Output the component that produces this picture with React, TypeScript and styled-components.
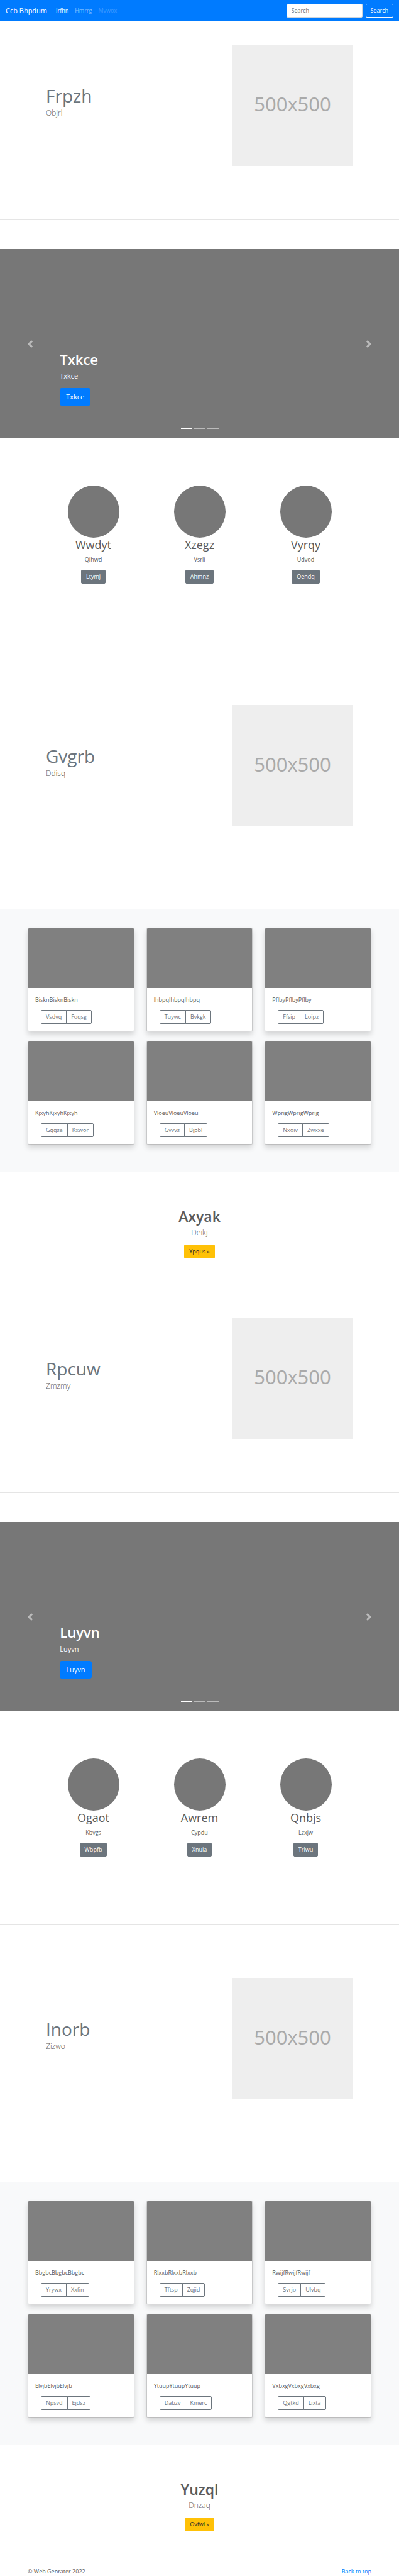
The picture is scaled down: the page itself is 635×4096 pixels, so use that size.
import React from "react";
import styled, { createGlobalStyle, css } from "styled-components";

const GlobalStyle = createGlobalStyle`
  *, *::before, *::after { box-sizing: border-box; }
  body {
    margin: 0;
    background: #fff;
    color: #5a5a5a;
    font-family: "Open Sans", "Noto Sans", sans-serif;
    font-size: 9px;
    line-height: 14px;
  }
  h1, h2, p { margin: 0; }
`;

const NavBar = styled.nav`
  display: flex;
  align-items: center;
  height: 33px;
  padding: 0 9px;
  background: #007bff;
`;

const Brand = styled.a`
  margin-right: 14px;
  color: #fff;
  font-size: 11px;
  line-height: 18px;
  text-decoration: none;
`;

const NavLinks = styled.div`
  display: flex;
  flex: 1;
  gap: 10px;
`;

const NavLink = styled.a<{ $alpha: number }>`
  color: rgba(255, 255, 255, ${(p) => p.$alpha});
  text-decoration: none;
`;

const SearchForm = styled.form`
  display: flex;
  gap: 5px;
`;

const SearchInput = styled.input`
  width: 121px;
  height: 22px;
  padding: 0 7px;
  border: 1px solid #ced4da;
  border-radius: 2px;
  background: #fff;
  font: inherit;
  &::placeholder { color: #6c757d; opacity: 1; }
`;

type Tone = "primary" | "secondary" | "warning" | "outlineLight";

const tones = {
  primary: css`background: #007bff; border-color: #007bff; color: #fff;`,
  secondary: css`background: #6c757d; border-color: #6c757d; color: #fff;`,
  warning: css`background: #ffc107; border-color: #ffc107; color: #212529;`,
  outlineLight: css`background: transparent; border-color: #f8f9fa; color: #f8f9fa;`,
};

const Button = styled.button<{ $tone: Tone; $large?: boolean }>`
  height: ${(p) => (p.$large ? 28 : 22)}px;
  padding: 0 ${(p) => (p.$large ? 9 : 7)}px;
  border: 1px solid;
  border-radius: ${(p) => (p.$large ? 3 : 2)}px;
  font-family: inherit;
  font-size: ${(p) => (p.$large ? 11 : 9)}px;
  line-height: 14px;
  ${(p) => tones[p.$tone]}
`;

const FeatureRow = styled.section`
  display: flex;
  align-items: center;
  justify-content: space-between;
  padding: 38px 73px;
`;

const FeatureTitle = styled.h2`
  color: #6c757d;
  font-size: 28px;
  font-weight: 400;
  line-height: 34px;
`;

const FeatureLead = styled.p`
  margin: 2px 0 12px;
  font-size: 12px;
  font-weight: 300;
  line-height: 18px;
`;

const Placeholder = styled.div`
  display: flex;
  align-items: center;
  justify-content: center;
  width: 193px;
  aspect-ratio: 1;
  padding-bottom: 5px;
  background: #eee;
  color: #aaa;
  font-size: 31px;
  line-height: 40px;
`;

const Divider = styled.hr`
  height: 1px;
  margin: 47px 0 46px;
  border: 0;
  background: #e5e5e5;
`;

const CarouselBox = styled.section`
  position: relative;
  display: flex;
  flex-direction: column;
  align-items: flex-start;
  justify-content: flex-end;
  height: 301px;
  padding: 0 15% 52px;
  background: #777;
  color: #fff;
`;

const CarouselTitle = styled.h1`
  font-size: 22px;
  font-weight: 600;
  line-height: 28px;
`;

const CarouselText = styled.p`
  margin: 4px 0 10px;
  font-size: 11px;
  line-height: 18px;
`;

const Arrow = styled.button<{ $side: "left" | "right" }>`
  position: absolute;
  top: 0;
  bottom: 0;
  ${(p) => p.$side}: 0;
  display: flex;
  align-items: center;
  justify-content: center;
  width: 15%;
  padding: 0;
  border: 0;
  background: transparent;
  color: #fff;
  opacity: 0.5;
`;

const Indicators = styled.div`
  position: absolute;
  right: 0;
  bottom: 15px;
  left: 0;
  display: flex;
  justify-content: center;
  gap: 3px;
`;

const Indicator = styled.button<{ $active?: boolean }>`
  width: 18px;
  height: 2px;
  padding: 0;
  border: 0;
  background: #fff;
  opacity: ${(p) => (p.$active ? 1 : 0.5)};
`;

const Marketing = styled.section`
  display: grid;
  grid-template-columns: repeat(3, 1fr);
  padding: 75px 64px 61px;
`;

const Profile = styled.div`
  display: flex;
  flex-direction: column;
  align-items: center;
`;

const Circle = styled.div`
  width: 82px;
  height: 83px;
  border-radius: 50%;
  background: #777;
`;

const ProfileName = styled.h2`
  font-size: 18px;
  font-weight: 400;
  line-height: 23px;
`;

const ProfileText = styled.p`
  margin: 5px 0 9px;
  line-height: 14px;
`;

const Album = styled.section`
  display: grid;
  grid-template-columns: repeat(3, 1fr);
  gap: 15px 19px;
  padding: 29px 44px 43px;
  background: #f8f9fa;
`;

const Card = styled.article`
  overflow: hidden;
  border: 1px solid rgba(0, 0, 0, 0.125);
  border-radius: 2px;
  background: #fff;
  background-clip: padding-box;
  box-shadow: 0 5px 9px rgba(0, 0, 0, 0.15);
`;

const CardImage = styled.div`
  height: 95px;
  background: #808080;
`;

const CardBody = styled.div`
  padding: 12px 11px 11px;
`;

const ButtonGroup = styled.div`
  display: flex;
  margin: 9px 9px 0;
`;

const GroupButton = styled.button`
  height: 22px;
  padding: 0 7px;
  border: 1px solid #6c757d;
  background: transparent;
  color: #6c757d;
  font: inherit;
  &:first-child { border-radius: 2px 0 0 2px; }
  &:last-child { margin-left: -1px; border-radius: 0 2px 2px 0; }
`;

const Callout = styled.section`
  display: flex;
  flex-direction: column;
  align-items: center;
  padding: 57px 44px 56px;
`;

const CalloutTitle = styled.h1`
  font-size: 23px;
  font-weight: 600;
  line-height: 28px;
`;

const CalloutText = styled.p`
  margin: 3px 0 10px;
  font-size: 12px;
  font-weight: 300;
  line-height: 18px;
`;

const Footer = styled.footer`
  display: flex;
  justify-content: space-between;
  padding: 0 44px;
  line-height: 15px;
`;

const FooterLink = styled.a`
  color: #007bff;
  text-decoration: none;
`;

function Feature({ title, lead }: { title: string; lead: string }) {
  return (
    <FeatureRow>
      <div>
        <FeatureTitle>{title}</FeatureTitle>
        <FeatureLead>{lead}</FeatureLead>
      </div>
      <Placeholder>500x500</Placeholder>
    </FeatureRow>
  );
}

function Carousel({ word }: { word: string }) {
  return (
    <CarouselBox>
      <CarouselTitle>{word}</CarouselTitle>
      <CarouselText>{word}</CarouselText>
      <Button $tone="primary" $large>{word}</Button>
      <Arrow $side="left" aria-label="Previous">
        <svg width="12" height="12" viewBox="0 0 8 8" fill="currentColor">
          <path d="M5.25 0l-4 4 4 4 1.5-1.5L4.25 4l2.5-2.5L5.25 0z" />
        </svg>
      </Arrow>
      <Arrow $side="right" aria-label="Next">
        <svg width="12" height="12" viewBox="0 0 8 8" fill="currentColor">
          <path d="M2.75 0l-1.5 1.5L3.75 4l-2.5 2.5L2.75 8l4-4-4-4z" />
        </svg>
      </Arrow>
      <Indicators>
        <Indicator $active aria-label="Slide 1" />
        <Indicator aria-label="Slide 2" />
        <Indicator aria-label="Slide 3" />
      </Indicators>
    </CarouselBox>
  );
}

interface PageBlock {
  feature: [string, string];
  slide: string;
  profiles: [string, string, string][];
  second: [string, string];
  cards: [string, string, string][];
  callout: [string, string, string];
}

const blocks: PageBlock[] = [
  {
    feature: ["Frpzh", "Objrl"],
    slide: "Txkce",
    profiles: [
      ["Wwdyt", "Qihwd", "Ltymj"],
      ["Xzegz", "Vsrli", "Ahmnz"],
      ["Vyrqy", "Udvod", "Oendq"],
    ],
    second: ["Gvgrb", "Ddisq"],
    cards: [
      ["Biskn", "Vsdvq", "Foqsg"],
      ["Jhbpq", "Tuywc", "Bvkgk"],
      ["Pflby", "Ffsip", "Loipz"],
      ["Kjxyh", "Gqqsa", "Kxwor"],
      ["Vloeu", "Gvvvs", "Bjpbl"],
      ["Wprig", "Nxoiv", "Zwxxe"],
    ],
    callout: ["Axyak", "Deikj", "Ypqus"],
  },
  {
    feature: ["Rpcuw", "Zmzmy"],
    slide: "Luyvn",
    profiles: [
      ["Ogaot", "Kbvgs", "Wbpfb"],
      ["Awrem", "Cypdu", "Xnuia"],
      ["Qnbjs", "Lzxjw", "Trlwu"],
    ],
    second: ["Inorb", "Zizwo"],
    cards: [
      ["Bbgbc", "Yrywx", "Xxfin"],
      ["Rlxxb", "Tftsp", "Zqjid"],
      ["Rwijf", "Svrjo", "Ulvbq"],
      ["Elvjb", "Npsvd", "Ejdsz"],
      ["Ytuup", "Dabzv", "Kmerc"],
      ["Vxbxg", "Qgtkd", "Lixta"],
    ],
    callout: ["Yuzql", "Dnzaq", "Ovfwl"],
  },
];

export default function App() {
  return (
    <>
      <GlobalStyle />
      <NavBar>
        <Brand href="#">Ccb Bhpdum</Brand>
        <NavLinks>
          <NavLink href="#" $alpha={1}>Jrfhn</NavLink>
          <NavLink href="#" $alpha={0.5}>Hmrrg</NavLink>
          <NavLink href="#" $alpha={0.25}>Mvwox</NavLink>
        </NavLinks>
        <SearchForm>
          <SearchInput type="text" placeholder="Search" aria-label="Search" />
          <Button type="button" $tone="outlineLight">Search</Button>
        </SearchForm>
      </NavBar>
      <main>
        {blocks.map((b) => (
          <React.Fragment key={b.slide}>
            <Feature title={b.feature[0]} lead={b.feature[1]} />
            <Divider />
            <Carousel word={b.slide} />
            <Marketing>
              {b.profiles.map(([name, text, action]) => (
                <Profile key={name}>
                  <Circle />
                  <ProfileName>{name}</ProfileName>
                  <ProfileText>{text}</ProfileText>
                  <Button $tone="secondary">{action}</Button>
                </Profile>
              ))}
            </Marketing>
            <Divider />
            <Feature title={b.second[0]} lead={b.second[1]} />
            <Divider />
            <Album>
              {b.cards.map(([word, left, right]) => (
                <Card key={word}>
                  <CardImage />
                  <CardBody>
                    <p>{word.repeat(3)}</p>
                    <ButtonGroup>
                      <GroupButton>{left}</GroupButton>
                      <GroupButton>{right}</GroupButton>
                    </ButtonGroup>
                  </CardBody>
                </Card>
              ))}
            </Album>
            <Callout>
              <CalloutTitle>{b.callout[0]}</CalloutTitle>
              <CalloutText>{b.callout[1]}</CalloutText>
              <Button $tone="warning">{b.callout[2]} »</Button>
            </Callout>
          </React.Fragment>
        ))}
      </main>
      <Footer>
        <span>© Web Genrater 2022</span>
        <FooterLink href="#">Back to top</FooterLink>
      </Footer>
    </>
  );
}
